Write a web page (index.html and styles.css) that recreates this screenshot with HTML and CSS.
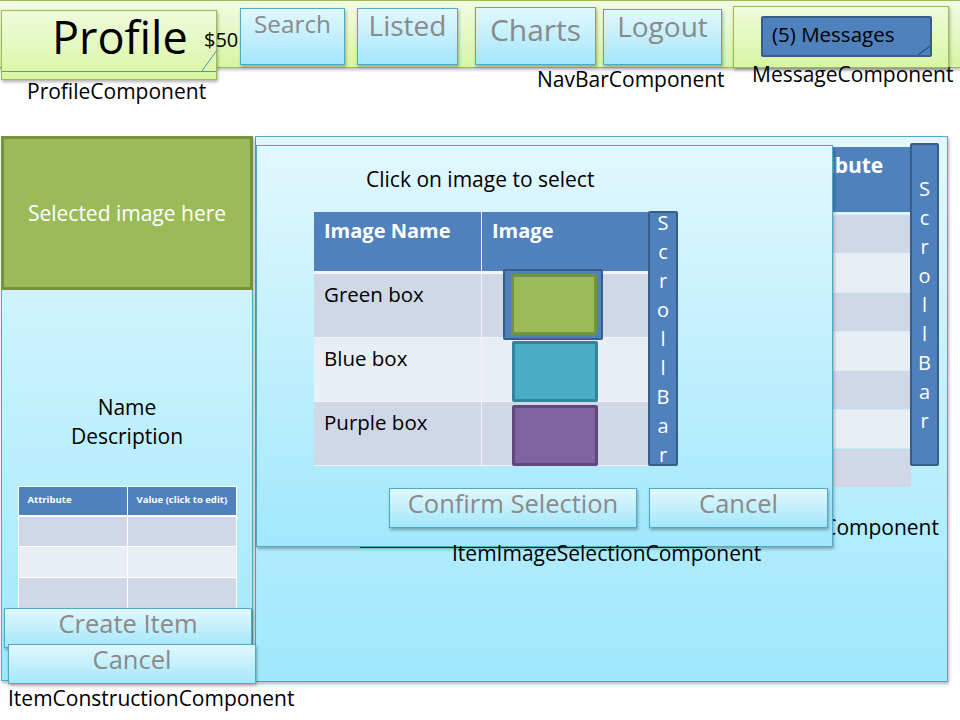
FILE: index.html
```html
<!DOCTYPE html>
<html>
<head>
<meta charset="utf-8">
<link rel="stylesheet" href="styles.css">
</head>
<body>
<div class="canvas">
  <div class="topbar"></div>

  <div class="profile">
    <span class="profile-title">Profile</span>
    <div class="profile-rule"></div>
    <svg class="profile-diag" width="16" height="22" viewBox="0 0 16 22"><line x1="0" y1="21" x2="15" y2="0" stroke="#5b8ec2" stroke-width="1"/></svg>
  </div>
  <span class="money">$50</span>
  <span class="label label-profile">ProfileComponent</span>

  <div class="btn nav nav-search"><span class="t24">Search</span></div>
  <div class="btn nav nav-listed"><span class="t26">Listed</span></div>
  <div class="btn nav nav-charts"><span class="t30">Charts</span></div>
  <div class="btn nav nav-logout"><span class="t28">Logout</span></div>
  <span class="label label-nav">NavBarComponent</span>

  <div class="msgcomp">
    <div class="msgbtn">(5) Messages
      <svg class="msg-diag" width="12" height="9" viewBox="0 0 12 9"><line x1="0" y1="9" x2="12" y2="0" stroke="#1f3a5a" stroke-width="1"/></svg>
    </div>
  </div>
  <span class="label label-msg">MessageComponent</span>

  <!-- background item selection component -->
  <div class="panel outer"></div>
  <div class="bgtable">
    <div class="bg-head"><span>Attribute</span></div>
    <div class="bg-row odd"></div>
    <div class="bg-row even"></div>
    <div class="bg-row odd"></div>
    <div class="bg-row even"></div>
    <div class="bg-row odd"></div>
    <div class="bg-row even"></div>
    <div class="bg-row odd"></div>
  </div>
  <div class="scroll scroll-right">
    <span>S</span><span>c</span><span>r</span><span>o</span><span>l</span><span>l</span><span>B</span><span>a</span><span>r</span>
  </div>
  <div class="label label-sel"><span>ItemSelectionComponent</span></div>

  <!-- dialog -->
  <div class="panel dialog">
    <div class="dialog-title">Click on image to select</div>
  </div>
  <div class="imgtable">
    <div class="it-head">Image Name</div>
    <div class="it-head">Image</div>
    <div class="it-cell odd">Green box</div>
    <div class="it-cell odd"></div>
    <div class="it-cell even">Blue box</div>
    <div class="it-cell even"></div>
    <div class="it-cell odd">Purple box</div>
    <div class="it-cell odd"></div>
  </div>
  <div class="selframe"></div>
  <div class="swatch sw-green"></div>
  <div class="swatch sw-blue"></div>
  <div class="swatch sw-purple"></div>
  <div class="scroll scroll-inner">
    <span>S</span><span>c</span><span>r</span><span>o</span><span>l</span><span>l</span><span>B</span><span>a</span><span>r</span>
  </div>
  <div class="btn act act-confirm"><span>Confirm Selection</span></div>
  <div class="btn act act-cancel"><span>Cancel</span></div>
  <div class="rule"></div>
  <span class="label label-dialog">ItemImageSelectionComponent</span>

  <!-- item construction -->
  <div class="panel construct">
    <div class="selected"><span>Selected image here</span></div>
    <div class="namedesc">Name<br>Description</div>
    <div class="attr">
      <div class="at-head">Attribute</div>
      <div class="at-head">Value (click to edit)</div>
      <div class="at-cell odd"></div><div class="at-cell odd"></div>
      <div class="at-cell even"></div><div class="at-cell even"></div>
      <div class="at-cell odd"></div><div class="at-cell odd"></div>
    </div>
  </div>
  <div class="btn act act-create"><span>Create Item</span></div>
  <div class="btn act act-lcancel"><span>Cancel</span></div>
  <span class="label label-construct">ItemConstructionComponent</span>
</div>
</body>
</html>
```
FILE: styles.css
```css
* { box-sizing: border-box; }
html, body { margin: 0; padding: 0; background: #fff; }
body { font-family: "Open Sans", "Noto Sans", "DejaVu Sans", sans-serif; color: #000; }
.canvas { position: relative; width: 960px; height: 720px; overflow: hidden; }
.canvas > * { position: absolute; }

.topbar {
  left: -2px; top: 0; width: 964px; height: 68px;
  background: linear-gradient(#f3fbe4, #d7f5a3);
  border: 1px solid #9bbb59;
  box-shadow: 0 2px 3px rgba(0,0,0,0.25);
}
.profile {
  left: 1px; top: 10px; width: 216px; height: 70px;
  background: linear-gradient(#f0fbdb, #d8f6a4);
  border: 1px solid #9bbb59;
  box-shadow: 1px 2px 3px rgba(0,0,0,0.3);
}
.profile > * { position: absolute; }
.profile-title { left: 50px; top: -4px; font-size: 45px; line-height: 60px; }
.profile-rule { left: 0; right: 0; top: 60px; height: 1px; background: #5b8ec2; }
.profile-diag { left: 200px; top: 39px; }
.money { left: 204px; top: 26px; font-size: 20px; line-height: 28px; }

.label { font-size: 21px; line-height: 24px; white-space: nowrap; }
.label-profile { left: 27px; top: 79px; }
.label-nav { left: 537px; top: 67px; }
.label-msg { left: 752px; top: 62px; }
.label-sel { left: 833px; width: 106px; top: 515px; overflow: hidden; display: flex; justify-content: flex-end; }
.label-dialog { left: 452px; top: 541px; }
.label-construct { left: 8px; top: 686px; }

.btn {
  display: flex; justify-content: center;
  background: linear-gradient(#e2f8fe, #a4e7fb);
  border: 1px solid #4bacc6;
  box-shadow: 1px 2px 3px rgba(0,0,0,0.3);
  color: #8a8a8a;
}
.nav { top: 8px; height: 57px; align-items: flex-start; }
.nav-search { left: 240px; width: 105px; }
.nav-listed { left: 357px; width: 101px; }
.nav-charts { left: 475px; top: 7px; height: 58px; width: 121px; }
.nav-logout { left: 603px; top: 9px; height: 56px; width: 119px; }
.t24 { font-size: 24.3px; line-height: 29px; }
.t26 { font-size: 28px; line-height: 32px; }
.t30 { font-size: 30px; line-height: 43px; }
.t28 { font-size: 28px; line-height: 32px; }

.msgcomp {
  left: 733px; top: 6px; width: 216px; height: 62px;
  background: linear-gradient(#f0fbdb, #d8f6a4);
  border: 1px solid #9bbb59;
  box-shadow: 1px 2px 3px rgba(0,0,0,0.3);
  padding: 9px 16px 0 27px;
}
.msgbtn {
  position: relative;
  width: 171px; height: 41px;
  background: #4f81bd; border: 2px solid #385d8a; border-radius: 2px;
  font-size: 20.5px; line-height: 33px; padding-left: 9px; white-space: nowrap;
}
.msg-diag { position: absolute; right: 0; bottom: 0; }

.panel {
  background: linear-gradient(#e3f8fe, #9fe8fc);
  border: 1px solid #4bacc6;
  box-shadow: 1px 2px 3px rgba(0,0,0,0.3);
}
.outer { left: 255px; top: 136px; width: 693px; height: 546px; }

.bgtable { left: 560px; top: 147px; width: 351px; display: flex; flex-direction: column; gap: 1px; }
.bg-head { height: 65px; background: #4f81bd; color: #fff; font-weight: 700; font-size: 21px; line-height: 26px; padding: 5px 0 0 226px; margin-bottom: 2px; }
.bg-row { height: 38px; }
.odd { background: #d0d8e8; }
.even { background: #e9edf4; }

.scroll {
  display: flex; flex-direction: column; align-items: center;
  background: #4f81bd; border: 2px solid #385d8a; border-radius: 2px;
  color: #fff; font-size: 20px; line-height: 29px;
}
.scroll-right { left: 910px; top: 143px; width: 29px; height: 323px; padding-top: 29px; }
.scroll-inner { left: 648px; top: 211px; width: 30px; height: 255px; padding-top: 0; }
.scroll-inner span:first-child { margin-top: -5px; }

.dialog { left: 256px; top: 145px; width: 577px; height: 402px; background: linear-gradient(#e2f8fe, #a2e8fc); }
.dialog-title { font-size: 21px; line-height: 26px; padding: 20px 0 0 109px; }

.imgtable {
  left: 314px; top: 212px; width: 334px;
  display: grid; grid-template-columns: 167px 167px; grid-template-rows: 61px 63px 63px 63px;
  gap: 1px 1px; background: #f2f4f9;
  border: 1px solid #f2f4f9; border-top: 0; border-left: 0;
}
.it-head { background: #4f81bd; color: #fff; font-weight: 700; font-size: 20px; line-height: 26px; padding: 6px 0 0 10px; margin-bottom: 2px; }
.it-cell { font-size: 20.5px; line-height: 26px; padding: 7px 0 0 10px; }
.selframe { left: 503px; top: 269px; width: 100px; height: 71px; background: #4f81bd; border: 2px solid #385d8a; border-radius: 2px; }
.swatch { width: 86px; height: 61px; border: 3px solid; border-radius: 2px; }
.sw-green { left: 511px; top: 274px; background: #9bbb59; border-color: #76923c; }
.sw-blue { left: 512px; top: 341px; background: #4bacc6; border-color: #31849b; }
.sw-purple { left: 512px; top: 405px; background: #8064a2; border-color: #5f497a; }

.act { align-items: flex-start; font-size: 25.5px; line-height: 28px; }
.act-confirm { left: 389px; top: 488px; width: 248px; height: 40px; }
.act-cancel { left: 649px; top: 488px; width: 179px; height: 40px; }
.act-create { left: 4px; top: 608px; width: 248px; height: 40px; }
.act-lcancel { left: 8px; top: 644px; width: 248px; height: 40px; }

.rule { left: 360px; top: 547px; width: 347px; height: 1px; background: #222; }

.construct { left: 1px; top: 136px; width: 252px; height: 545px; display: flex; flex-direction: column; align-items: center; }
.selected {
  align-self: stretch; height: 154px; margin: -1px -1px 0;
  background: #9bbb59; border: 3px solid #76923c;
  display: flex; align-items: center; justify-content: center;
  color: #fff; font-size: 21px;
}
.namedesc { margin-top: 103px; text-align: center; font-size: 21px; line-height: 29px; }
.attr {
  margin-top: 35px; width: 219px;
  display: grid; grid-template-columns: 108px 108px; grid-template-rows: 28px 29px 29px 30px;
  gap: 2px 1px; background: #fff; border: 1px solid #fff; border-bottom: 0;
}
.at-head { background: #4f81bd; color: #fff; font-weight: 700; font-size: 9.5px; line-height: 12px; padding: 7px 0 0 9px; }
.at-head + .at-head { padding-left: 9px; }
.attr .at-cell:nth-child(n+5) { margin-top: -1px; }
```
